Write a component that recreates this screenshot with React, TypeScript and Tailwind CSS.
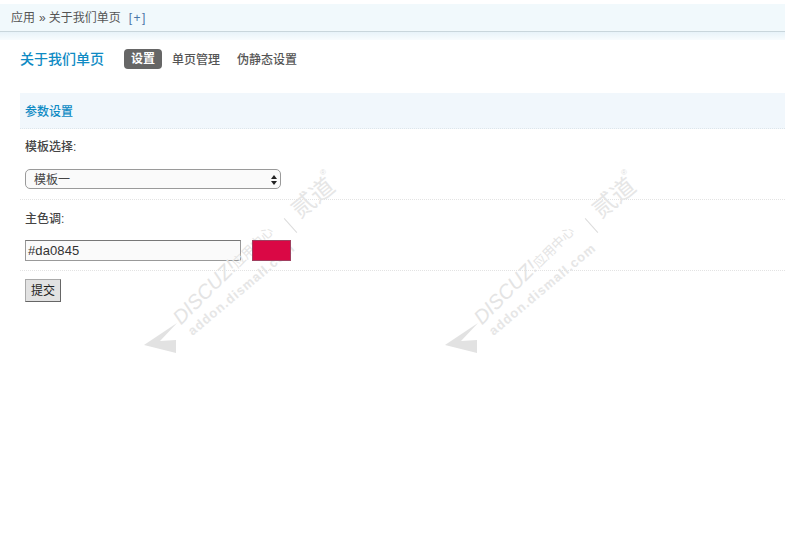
const font = "font-['Liberation_Sans','Noto_Sans_CJK_SC',sans-serif]";

function Watermark({ className }: { className: string }) {
  return (
    <div className={`absolute pointer-events-none w-[200px] h-[200px] ${className}`}>
      {/* paper plane */}
      <svg className="absolute left-[13px] top-[160px]" width="44" height="36" viewBox="0 0 44 36">
        <path d="M0 25 L33 3 L16 21 L32 20 L32 33 Z" fill="#e2e2e2" />
      </svg>
      <div className="absolute left-[46px] top-[149px] origin-left -rotate-[45deg] whitespace-nowrap text-[20px] leading-[22px] italic text-[#e4e4e4]">
        DISCUZ!<span className="not-italic text-[13px]">应用中心</span>
      </div>
      <div className="absolute left-[59px] top-[166px] origin-left -rotate-[40deg] whitespace-nowrap text-[13px] leading-[14px] font-bold tracking-[1px] text-[#e6e6e6]">
        addon.dismall.com
      </div>
      <div className="absolute left-[159px] top-[56px] h-[19px] w-px -rotate-[42deg] bg-[#dcdcdc]" />
      <div className="absolute left-[158px] top-[24px] -rotate-[39deg] whitespace-nowrap text-[24px] leading-[28px] text-[#e6e6e6]">
        贰道
      </div>
      <div className="absolute left-[189px] top-[8px] text-[8px] leading-[10px] text-[#e0e0e0]">®</div>
    </div>
  );
}

export default function App() {
  return (
    <div className={`relative w-[785px] h-[535px] overflow-hidden bg-white pt-1 text-[12px] text-[#333] ${font}`}>
      <Watermark className="left-[131px] top-[160px]" />
      <Watermark className="left-[432px] top-[160px]" />

      {/* breadcrumb */}
      <div className="relative flex h-[27px] items-center bg-[#f1f9fc] pl-[11px] text-[12px] text-[#555]">
        <span>应用</span>
        <span className="ml-1 mr-[3px]">»</span>
        <span>关于我们单页</span>
        <span className="ml-2 tracking-[1.5px] text-[#4a76a8]">[+]</span>
      </div>
      <div className="relative h-[9px] border-t border-t-[#c9d6dc] bg-gradient-to-b from-[#e8f3f9] to-[#f8fcfe]" />

      <div className="pl-5">
        {/* title and tabs */}
        <div className="mb-[15px] flex h-[38px] items-center">
          <h1 className="w-[104px] text-[14px] font-medium text-[#0f8bc4]">关于我们单页</h1>
          <div className="flex items-center font-medium text-[#555]">
            <span className="flex h-[20px] w-[38px] items-center justify-center rounded-[4px] bg-[#666] font-bold text-white">设置</span>
            <span className="ml-[10px] pt-[1px]">单页管理</span>
            <span className="ml-[17px] pt-[1px]">伪静态设置</span>
          </div>
        </div>

        {/* settings form */}
        <div className="flex h-[36px] items-center border-b border-dotted border-b-[#dde5ea] bg-[#f1f7fc] pl-[5px] pt-[2px] font-medium text-[#0f8bc4]">
          参数设置
        </div>
        <div className="flex h-[34px] items-center pl-[5px] pt-[2px] font-medium text-[#444]">模板选择:</div>
        <div className="h-[37px] border-b border-dotted border-b-[#e3e3e3] pl-[5px] pt-[6px]">
          <div className="relative flex h-[20px] w-[256px] items-center justify-between rounded-[5px] border border-[#9a9a9a] bg-[#fafafa] pl-2 pr-[2px] pt-[1px] text-[#444]">
            <span>模板一</span>
            <svg width="8" height="12" viewBox="0 0 8 12" fill="#222">
              <path d="M4 1 L7 5 H1 Z M1 7 H7 L4 11 Z" />
            </svg>
          </div>
        </div>
        <div className="flex h-[36px] items-center pl-[5px] pt-[1px] font-medium text-[#444]">主色调:</div>
        <div className="flex h-[35px] items-start gap-[11px] border-b border-dotted border-b-[#e3e3e3] pl-[5px] pt-[4px]">
          <div className="flex h-[21px] w-[216px] items-center border border-[#999] border-t-[#777] bg-[#f9f9f9]/80 pl-[2px] pt-[1px] text-[13px] tracking-[0.1px] text-[#333]">
            #da0845
          </div>
          <div className="relative h-[21px] w-[39px] border border-[#a04060] bg-[#da0845]" />
        </div>
        <div className="pl-[5px] pt-2">
          <button className="flex h-[23px] w-[36px] items-center justify-center border border-[#aaa] border-b-[#666] border-r-[#666] bg-[#e2e2e2] text-[#222]">
            提交
          </button>
        </div>
      </div>
    </div>
  );
}
